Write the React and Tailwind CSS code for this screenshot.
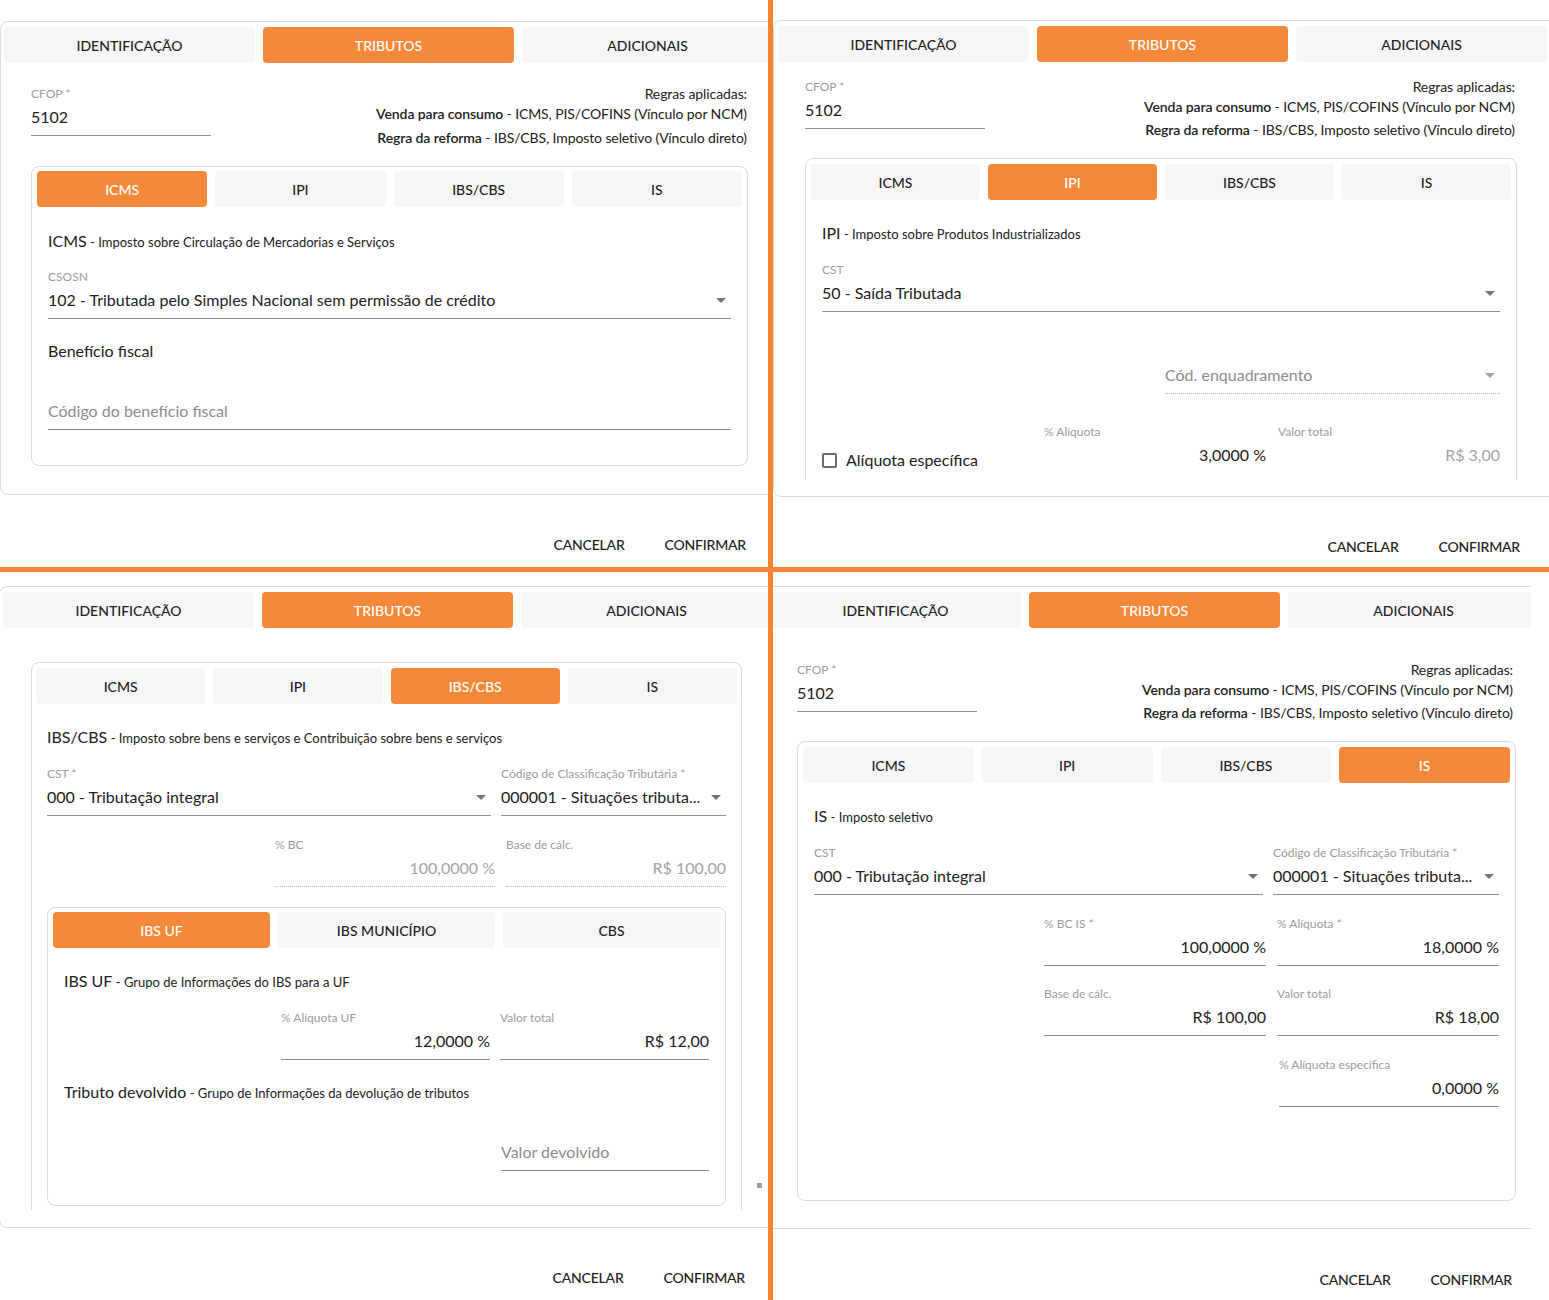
import React from "react";

const SUB_TABS = ["ICMS", "IPI", "IBS/CBS", "IS"];

function Caret({ light }) {
  return (
    <svg width="10" height="5" viewBox="0 0 10 5" className="shrink-0 mr-[5px]">
      <path d="M0 0h10L5 5z" fill={light ? "#a0a0a0" : "#757575"} />
    </svg>
  );
}

function MainTabs({ className = "" }) {
  return (
    <div className={`flex gap-2 ${className}`}>
      {["IDENTIFICAÇÃO", "TRIBUTOS", "ADICIONAIS"].map((t) => (
        <div
          key={t}
          className={`w-[251px] h-9 shrink-0 rounded flex items-center justify-center text-[14px] font-medium ${
            t === "TRIBUTOS" ? "bg-[#f5893a] text-white" : "bg-[#f6f6f6] text-[#1e1e1e]"
          }`}
        >
          {t}
        </div>
      ))}
    </div>
  );
}

function SubTabs({ items = SUB_TABS, active, cols = "grid-cols-4", className = "" }) {
  return (
    <div className={`grid gap-2 ${cols} ${className}`}>
      {items.map((t) => (
        <div
          key={t}
          className={`h-9 rounded flex items-center justify-center text-[14px] font-medium ${
            t === active ? "bg-[#f5893a] text-white" : "bg-[#f6f6f6] text-[#1e1e1e]"
          }`}
        >
          {t}
        </div>
      ))}
    </div>
  );
}

function Field({ label, value, placeholder, right, muted, dotted, select, noLine, className = "" }) {
  const line = noLine
    ? "border-transparent"
    : dotted
    ? "border-dotted border-[#b3b3b3]"
    : "border-[#8d8d8d]";
  const color = placeholder ? "text-[#8c8c8c]" : muted ? "text-[#a3a3a3]" : "text-[#202020]";
  return (
    <div className={className}>
      {label && (
        <div className="h-4 mb-[3px] text-[12px] leading-4 text-[#9b9b9b] whitespace-nowrap">{label}</div>
      )}
      <div className={`h-[31px] pb-[6px] flex items-center gap-1 border-b ${line}`}>
        <span className={`flex-1 min-w-0 whitespace-nowrap text-[16px] leading-6 ${right ? "text-right" : ""} ${color}`}>
          {value || placeholder}
        </span>
        {select && <Caret light={!!placeholder} />}
      </div>
    </div>
  );
}

function Rules({ last, className = "" }) {
  return (
    <div className={`text-right text-[14px] leading-5 tracking-[-0.1px] text-[#202020] whitespace-nowrap ${className}`}>
      <div>Regras aplicadas:</div>
      <div>
        <span className="font-semibold">Venda para consumo</span> - ICMS, PIS/COFINS (Vínculo por NCM)
      </div>
      <div className={last}>
        <span className="font-semibold">Regra da reforma</span> - IBS/CBS, Imposto seletivo (Vínculo direto)
      </div>
    </div>
  );
}

function SectionTitle({ title, desc, className = "" }) {
  return (
    <div className={`h-6 leading-6 whitespace-nowrap ${className}`}>
      <span className="text-[16px]">{title}</span>
      <span className="text-[13px]"> - {desc}</span>
    </div>
  );
}

function Footer({ className = "" }) {
  return (
    <div className={`flex justify-end gap-10 text-[14px] leading-5 font-medium tracking-[-0.2px] text-[#202020] ${className}`}>
      <span>CANCELAR</span>
      <span>CONFIRMAR</span>
    </div>
  );
}

function TopLeft() {
  return (
    <div className="w-[768px] h-full shrink-0 overflow-hidden">
      <div className="mt-[21px] w-[778px] h-[474px] border border-[#dadada] rounded-lg">
        <MainTabs className="mt-[5px] ml-[3px]" />
        <div className="ml-[30px] w-[717px]">
          <div className="mt-[21px] flex justify-between items-start">
            <Field className="w-[180px] mt-[2px]" label="CFOP *" value="5102" />
            <Rules last="mt-[4px]" className="pr-px" />
          </div>
          <div className="mt-[18px] h-[300px] border border-[#d9d9d9] rounded-lg">
            <SubTabs className="pt-[4px] px-[5px]" active="ICMS" />
            <div className="px-4">
              <SectionTitle className="mt-[22px]" title="ICMS" desc="Imposto sobre Circulação de Mercadorias e Serviços" />
              <Field
                className="mt-4"
                label="CSOSN"
                value="102 - Tributada pelo Simples Nacional sem permissão de crédito"
                select
              />
              <div className="mt-5 h-6 text-[16px] leading-6">Benefício fiscal</div>
              <Field className="mt-9" placeholder="Código do benefício fiscal" />
            </div>
          </div>
        </div>
      </div>
      <Footer className="mt-[40px] pr-[22px]" />
    </div>
  );
}

function TopRight() {
  return (
    <div className="w-[776px] h-full shrink-0 overflow-hidden">
      <div className="mt-[20px] w-[790px] h-[477px] border border-[#dadada] rounded-lg">
        <MainTabs className="mt-[5px] ml-[4px]" />
        <div className="h-[418px] overflow-hidden">
          <div className="ml-[31px] w-[712px]">
            <div className="mt-[15px] flex justify-between items-start">
              <Field className="w-[180px] mt-[2px]" label="CFOP *" value="5102" />
              <Rules last="mt-[3px]" className="pr-[2px]" />
            </div>
            <div className="mt-[18px] h-[420px] border border-[#d9d9d9] rounded-lg">
              <SubTabs className="pt-[5px] px-[5px]" active="IPI" />
              <div className="px-4">
                <SectionTitle className="mt-[21px]" title="IPI" desc="Imposto sobre Produtos Industrializados" />
                <Field className="mt-[17px]" label="CST" value="50 - Saída Tributada" select />
                <Field className="mt-[51px] ml-auto w-[335px]" placeholder="Cód. enquadramento" select dotted />
                <div className="mt-[30px] flex">
                  <div className="mt-[24px] h-6 flex-1 flex items-center gap-[9px]">
                    <div className="w-[15px] h-[15px] border-2 border-[#6b6b6b] rounded-[2px]" />
                    <span className="text-[16px] leading-6">Alíquota específica</span>
                  </div>
                  <div className="flex gap-3">
                    <Field className="w-[222px]" label="% Alíquota" value="3,0000 %" right noLine />
                    <Field className="w-[222px]" label="Valor total" value="R$ 3,00" right muted noLine />
                  </div>
                </div>
              </div>
            </div>
          </div>
        </div>
      </div>
      <Footer className="mt-[40px] pr-[29px]" />
    </div>
  );
}

function BottomLeft() {
  return (
    <div className="w-[768px] h-full shrink-0 overflow-hidden">
      <div className="mt-[14px] -ml-px w-[780px] h-[642px] border border-[#dadada] rounded-lg">
        <MainTabs className="mt-[5px] ml-[3px]" />
        <div className="relative h-[582px] overflow-hidden">
          <div className="mt-[34px] ml-[31px] w-[711px] pb-[80px] border border-[#d9d9d9] rounded-lg">
            <SubTabs className="pt-[5px] px-[4px]" active="IBS/CBS" />
            <div className="px-[15px]">
              <SectionTitle
                className="mt-[21px]"
                title="IBS/CBS"
                desc="Imposto sobre bens e serviços e Contribuição sobre bens e serviços"
              />
              <div className="mt-[17px] flex gap-[10px]">
                <Field className="flex-1" label="CST *" value="000 - Tributação integral" select />
                <Field
                  className="w-[225px]"
                  label="Código de Classificação Tributária *"
                  value="000001 - Situações tributa..."
                  select
                />
              </div>
              <div className="mt-[21px] flex justify-end gap-[11px]">
                <Field className="w-[220px]" label="% BC" value="100,0000 %" right muted dotted />
                <Field className="w-[220px]" label="Base de cálc." value="R$ 100,00" right muted dotted />
              </div>
              <div className="mt-[20px] pb-[34px] border border-[#d9d9d9] rounded-lg">
                <SubTabs
                  items={["IBS UF", "IBS MUNICÍPIO", "CBS"]}
                  active="IBS UF"
                  cols="grid-cols-3"
                  className="pt-[4px] px-[5px]"
                />
                <div className="px-4">
                  <SectionTitle className="mt-[21px]" title="IBS UF" desc="Grupo de Informações do IBS para a UF" />
                  <div className="mt-[17px] flex justify-end gap-[10px]">
                    <Field className="w-[209px]" label="% Alíquota UF" value="12,0000 %" right />
                    <Field className="w-[209px]" label="Valor total" value="R$ 12,00" right />
                  </div>
                  <SectionTitle
                    className="mt-[20px]"
                    title="Tributo devolvido"
                    desc="Grupo de Informações da devolução de tributos"
                  />
                  <Field className="mt-[36px] ml-auto w-[208px]" placeholder="Valor devolvido" />
                </div>
              </div>
            </div>
          </div>
          <div className="absolute left-[757px] top-[555px] w-[5px] h-[5px] bg-[#9e9e9e]" />
        </div>
      </div>
      <Footer className="mt-[40px] pr-[23px]" />
    </div>
  );
}

function BottomRight() {
  return (
    <div className="w-[776px] h-full shrink-0">
      <div className="w-[758px] h-full overflow-hidden">
        <div className="mt-[14px] -ml-[7px] w-[790px] h-[643px] border border-[#dadada] rounded-lg">
          <MainTabs className="mt-[5px] ml-[3px]" />
          <div className="ml-[30px] w-[719px]">
            <div className="mt-[32px] flex justify-between items-start">
              <Field className="w-[180px] mt-[2px]" label="CFOP *" value="5102" />
              <Rules last="mt-[3px]" className="pr-[3px]" />
            </div>
            <div className="mt-[18px] h-[460px] border border-[#d9d9d9] rounded-lg">
              <SubTabs className="pt-[5px] px-[5px]" active="IS" />
              <div className="px-4">
                <SectionTitle className="mt-[21px]" title="IS" desc="Imposto seletivo" />
                <div className="mt-[17px] flex gap-[10px]">
                  <Field className="flex-1" label="CST" value="000 - Tributação integral" select />
                  <Field
                    className="w-[226px]"
                    label="Código de Classificação Tributária *"
                    value="000001 - Situações tributa..."
                    select
                  />
                </div>
                <div className="mt-[21px] flex justify-end gap-[11px]">
                  <Field className="w-[222px]" label="% BC IS *" value="100,0000 %" right />
                  <Field className="w-[222px]" label="% Alíquota *" value="18,0000 %" right />
                </div>
                <div className="mt-[20px] flex justify-end gap-[11px]">
                  <Field className="w-[222px]" label="Base de cálc." value="R$ 100,00" right />
                  <Field className="w-[222px]" label="Valor total" value="R$ 18,00" right />
                </div>
                <Field className="mt-[21px] ml-auto w-[220px]" label="% Alíquota específica" value="0,0000 %" right />
              </div>
            </div>
          </div>
        </div>
        <Footer className="mt-[41px] pr-[19px]" />
      </div>
    </div>
  );
}

export default function App() {
  return (
    <div className="w-[1549px] h-[1300px] bg-white overflow-hidden font-['Lato',sans-serif] text-[#202020] flex flex-col">
      <div className="flex h-[567px] shrink-0">
        <TopLeft />
        <div className="w-[5px] shrink-0 bg-[#f5862f]" />
        <TopRight />
      </div>
      <div className="h-[5px] shrink-0 bg-[#f5862f]" />
      <div className="flex flex-1 min-h-0">
        <BottomLeft />
        <div className="w-[5px] shrink-0 bg-[#f5862f]" />
        <BottomRight />
      </div>
    </div>
  );
}
